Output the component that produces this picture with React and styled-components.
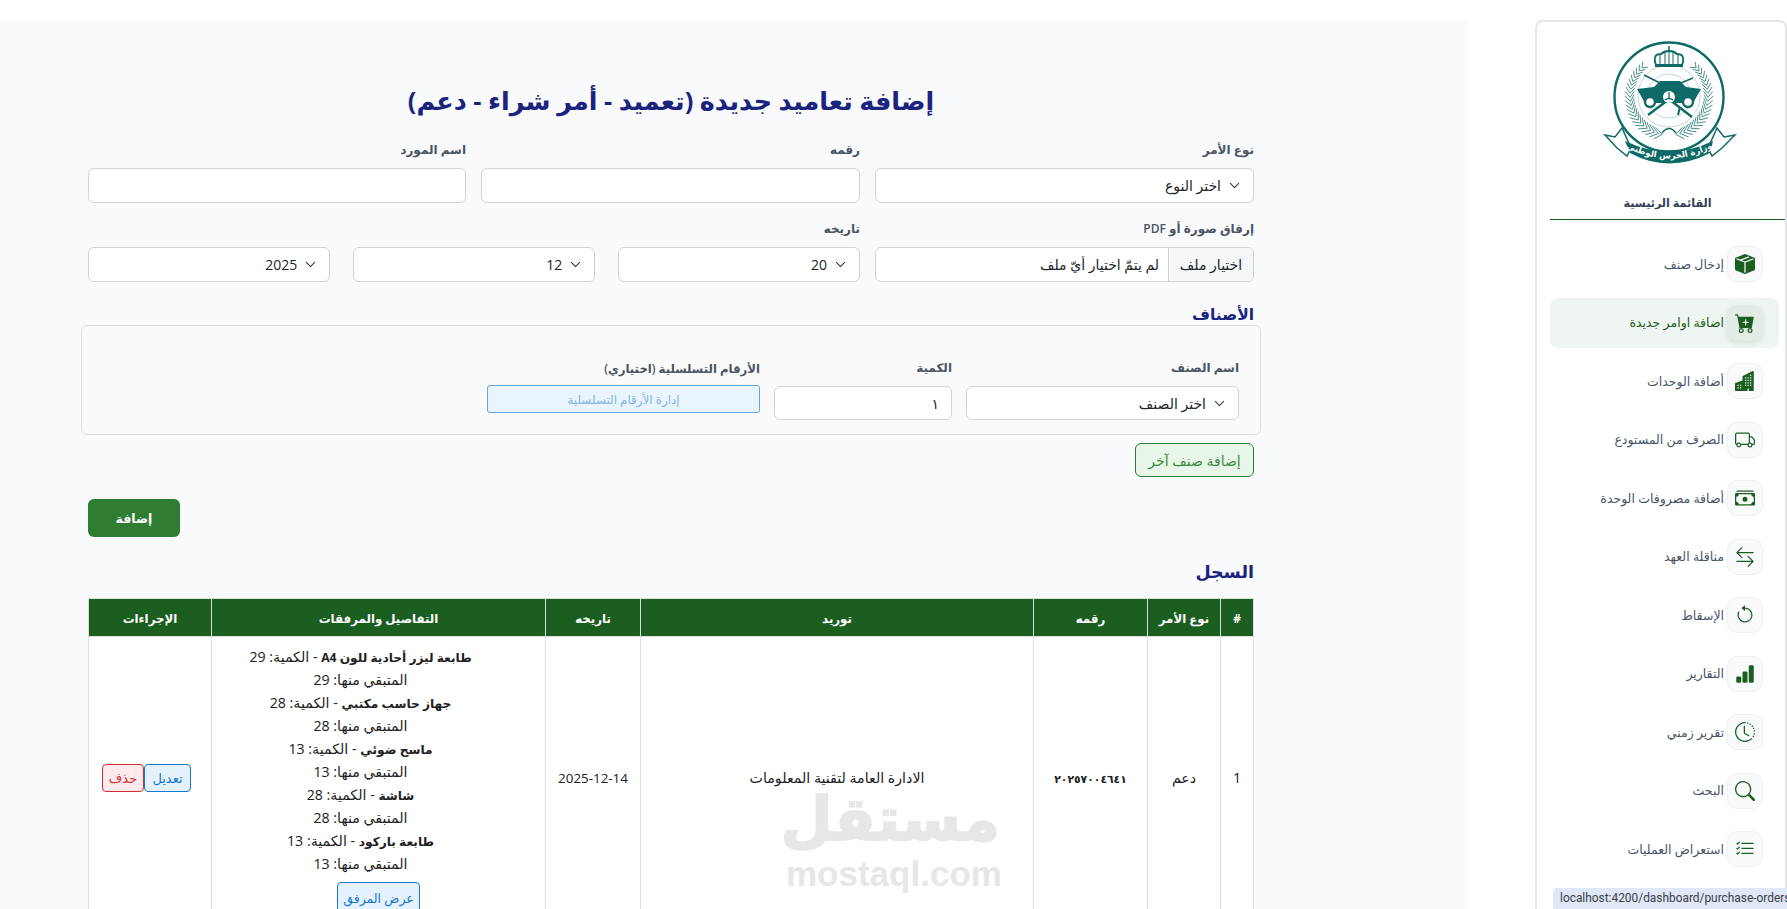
import React from 'react'
import styled, { createGlobalStyle } from 'styled-components'
import {
  BsBoxSeamFill,
  BsCartPlusFill,
  BsBuildingsFill,
  BsTruck,
  BsCashStack,
  BsArrowLeftRight,
  BsArrowCounterclockwise,
  BsBarChartFill,
  BsClockHistory,
  BsSearch,
  BsListCheck,
} from 'react-icons/bs'

const chevron =
  "url(\"data:image/svg+xml,%3csvg xmlns='http://www.w3.org/2000/svg' viewBox='0 0 16 16'%3e%3cpath fill='none' stroke='%23343a40' stroke-linecap='round' stroke-linejoin='round' stroke-width='1.6' d='m2 5 6 6 6-6'/%3e%3c/svg%3e\")"

const GlobalStyle = createGlobalStyle`
  html, body {
    margin: 0;
    height: 100%;
    overflow: hidden;
    background: #fff;
  }
  body {
    font-family: "Open Sans", "DejaVu Sans", sans-serif;
    font-size: 13px;
    color: #212529;
  }
  * { box-sizing: border-box; }
`

const Shell = styled.div`
  direction: rtl;
  display: flex;
  justify-content: flex-start;
  height: 100vh;
  padding-top: 20px;
  overflow: hidden;
`

const Sidebar = styled.aside`
  flex: 0 0 252px;
  border: 2px solid #e4e6ea;
  border-bottom: 0;
  border-radius: 8px 8px 0 0;
  padding: 18px 0 0 13px;
  margin-left: 67px;
  background: #fff;
`

const LogoWrap = styled.div`
  display: flex;
  justify-content: flex-end;
  padding-left: 50px;
  height: 128px;
`

const MenuTitle = styled.div`
  margin-top: 25px;
  padding-bottom: 6px;
  text-align: center;
  font-size: 11.2px;
  font-weight: 600;
  line-height: 20px;
  color: #334155;
  border-bottom: 1px solid #1b5e20;
`

const Menu = styled.nav`
  display: flex;
  flex-direction: column;
  gap: 8.5px;
  margin: 19px 6px 0 0;
`

const MenuItem = styled.a`
  display: flex;
  align-items: center;
  gap: 3px;
  height: 50px;
  padding: 0 16px;
  border-radius: 8px;
  font-size: 12.5px;
  color: ${p => (p.$active ? '#1b5e20' : '#475569')};
  background: ${p => (p.$active ? '#eff5f1' : 'transparent')};
`

const MenuIcon = styled.span`
  flex: 0 0 36px;
  height: 36px;
  display: flex;
  align-items: center;
  justify-content: center;
  border-radius: 10px;
  font-size: 20px;
  color: #1b5e20;
  background: ${p => (p.$active ? '#e2ece5' : '#f8fafc')};
  border: 1px solid ${p => (p.$active ? '#e2ece5' : '#edf2f0')};
  box-shadow: ${p => (p.$active ? '0 2px 5px rgba(27,94,32,.12)' : 'none')};
`

const Main = styled.main`
  position: relative;
  flex: 0 0 1468px;
  padding: 63px 214px 0 88px;
  background: #f8fafc;
  overflow: hidden;
`

const Title = styled.h1`
  margin: 0 0 24px;
  text-align: center;
  font-size: 25.4px;
  font-weight: 700;
  line-height: 34px;
  color: #1a237e;
`

const TopGrid = styled.div`
  display: grid;
  grid-template-columns: 379px 379px 378px;
  gap: 15px;
  margin-bottom: 17px;
`

const SecondGrid = styled.div`
  display: grid;
  grid-template-columns: 379px 1fr;
  gap: 15px;
`

const DateRow = styled.div`
  display: grid;
  grid-template-columns: repeat(3, 1fr);
  gap: 22.5px;
`

const Label = styled.label`
  display: block;
  margin-bottom: 9px;
  font-size: 12px;
  font-weight: 600;
  line-height: 18px;
  color: #4b5563;
`

const Input = styled.input`
  display: block;
  width: 100%;
  height: ${p => p.$h || 35}px;
  padding: 0 12px;
  border: 1px solid #ced4da;
  border-radius: 6px;
  background: #fff;
  font: inherit;
  font-size: 14px;
  color: #212529;
`

const Select = styled.select`
  display: block;
  width: 100%;
  height: ${p => p.$h || 35}px;
  padding: 0 32px 0 12px;
  appearance: none;
  border: 1px solid #ced4da;
  border-radius: 6px;
  background: #fff ${chevron} no-repeat right 13px center / 11px 11px;
  font: inherit;
  font-size: 14px;
  color: #212529;
`

const FileBox = styled.div`
  display: flex;
  height: 35px;
  border: 1px solid #ced4da;
  border-radius: 6px;
  background: #fff;
  overflow: hidden;
  font-size: 14px;
  line-height: 33px;
`

const FileButton = styled.span`
  flex: 0 0 85px;
  text-align: center;
  background: #f5f6f8;
  border-left: 1px solid #ced4da;
`

const FileName = styled.span`
  padding-right: 9px;
`

const SectionTitle = styled.h2`
  margin: ${p => p.$top}px 0 ${p => p.$bottom}px;
  font-size: ${p => p.$size}px;
  font-weight: 600;
  line-height: ${p => p.$line}px;
  color: #1a237e;
`

const ItemBox = styled.div`
  margin: 0 -7px;
  height: 110px;
  padding: 33px 21px 0;
  border: 1px solid #e0e0e0;
  border-radius: 6px;
  background: #fafafa;
`

const ItemRow = styled.div`
  display: grid;
  grid-template-columns: 273px 178px 273px;
  column-gap: 14px;
`

const SerialLabel = styled(Label)`
  font-size: 11.7px;
`

const SerialButton = styled.button`
  display: block;
  width: 100%;
  height: 28px;
  margin-top: -1px;
  border: 1px solid #64a5e6;
  border-radius: 3px;
  background: #eaf4fc;
  font: inherit;
  font-size: 11.9px;
  color: #7fb4e8;
`

const ActionBar = styled.div`
  display: flex;
  justify-content: ${p => (p.$end ? 'flex-end' : 'flex-start')};
  margin-top: ${p => p.$top}px;
`

const OutlineButton = styled.button`
  width: 119px;
  height: 34px;
  border: 1px solid #2e7d32;
  border-radius: 6px;
  background: #e8f5e9;
  font: inherit;
  font-size: 14px;
  color: #3d8a41;
`

const SubmitButton = styled.button`
  width: 92px;
  height: 38px;
  border: 0;
  border-radius: 6px;
  background: #2e7d32;
  font: inherit;
  font-size: 12.5px;
  font-weight: 700;
  color: #fff;
`

const Table = styled.table`
  width: 1165px;
  table-layout: fixed;
  border-collapse: collapse;
  background: #fff;
  font-size: 14.2px;
  color: #212121;

  th, td {
    border: 1px solid #dcdfe2;
    text-align: center;
    vertical-align: middle;
  }
  th {
    height: 38px;
    background: #1b5e20;
    color: #fff;
    font-size: 11.8px;
    font-weight: 700;
  }
`

const DateCell = styled.td`
  font-size: 13.4px;
`

const DetailCell = styled.td`
  padding: 8px 8px 4px;
  height: 282px;
`

const DetailList = styled.ul`
  list-style: none;
  margin: 0;
  padding: 0 36px 0 0;
  line-height: 23px;

  li {
    height: 23px;
  }
  strong {
    font-size: 12.2px;
  }
`

const SerialNumber = styled.strong`
  font-size: 10.8px;
  font-weight: 700;
`

const SmallButton = styled.button`
  width: ${p => p.$w}px;
  height: 28px;
  padding: 0;
  border: 1px solid ${p => p.$color};
  border-radius: 4px;
  background: ${p => p.$bg};
  font: inherit;
  font-size: 13px;
  color: ${p => p.$color};
`

const AttachButton = styled(SmallButton)`
  height: 32px;
  margin-top: 7px;
  font-size: 12.5px;
`

const Actions = styled.div`
  display: flex;
  justify-content: center;
  margin-right: 7px;
`

const Watermark = styled.div`
  position: absolute;
  left: 786px;
  top: 768px;
  width: 214px;
  direction: ltr;
  text-align: center;
  color: #e6e7e7;
  pointer-events: none;
`

const WatermarkArabic = styled.div`
  font-family: "DejaVu Sans", sans-serif;
  font-size: 60px;
  font-weight: 700;
  line-height: 62px;
  direction: rtl;
  -webkit-text-stroke: 2px #e6e7e7;
`

const WatermarkLatin = styled.div`
  margin-top: 6px;
  font-family: "Liberation Sans", sans-serif;
  font-size: 35px;
  font-weight: 700;
  line-height: 36px;
  white-space: nowrap;
`

const StatusBubble = styled.div`
  position: fixed;
  left: 1553px;
  right: 0;
  bottom: 0;
  height: 21px;
  padding-left: 7px;
  border-top-left-radius: 4px;
  background: #dfe7f8;
  font-family: Roboto, sans-serif;
  font-size: 11.9px;
  line-height: 21px;
  color: #3c4043;
  white-space: nowrap;
  overflow: hidden;
`

const menu = [
  ['إدخال صنف', BsBoxSeamFill],
  ['اضافة اوامر جديدة', BsCartPlusFill, true],
  ['أضافة الوحدات', BsBuildingsFill],
  ['الصرف من المستودع', BsTruck],
  ['أضافة مصروفات الوحدة', BsCashStack],
  ['مناقلة العهد', BsArrowLeftRight],
  ['الإسقاط', BsArrowCounterclockwise],
  ['التقارير', BsBarChartFill],
  ['تقرير زمني', BsClockHistory],
  ['البحث', BsSearch],
  ['استعراض العمليات', BsListCheck],
]

const items = [
  ['طابعة ليزر أحادية للون A4', 29],
  ['جهاز حاسب مكتبي', 28],
  ['ماسح ضوئي', 13],
  ['شاشة', 28],
  ['طابعة باركود', 13],
]

const teal = '#0e6a66'

// palm branch: a stem curving up from the bottom of the ring, with a leaf pair at each step
const branch = side => {
  const cx = 69
  const cy = 56
  const r = 39
  let d = ''
  for (let deg = 10; deg <= 140; deg += 6) {
    const a = (deg * Math.PI) / 180
    const x = cx + side * r * Math.sin(a)
    const y = cy + r * Math.cos(a)
    const dir = Math.atan2(-Math.sin(a), side * Math.cos(a))
    const len = 10 - deg / 35
    ;[0.65, -0.65].forEach(off => {
      const t = dir + off
      d += `M${x.toFixed(1)} ${y.toFixed(1)}L${(x + len * Math.cos(t)).toFixed(1)} ${(y + len * Math.sin(t)).toFixed(1)}`
    })
  }
  return d
}

const Logo = () => (
  <svg width="140" height="128" viewBox="0 0 140 128">
    <circle cx="69" cy="57" r="54.5" fill="none" stroke={teal} strokeWidth="2.4" />
    <circle cx="69" cy="56" r="31" fill="none" stroke="#a9c4c2" strokeWidth="0.7" />
    <circle cx="69" cy="56" r="22" fill="none" stroke="#a9c4c2" strokeWidth="0.7" />
    <path d={branch(1)} fill="none" stroke={teal} strokeWidth="0.75" />
    <path d={branch(-1)} fill="none" stroke={teal} strokeWidth="0.75" />
    {/* crown */}
    <path d="M56 25 q-4 -11 5 -11 q3 -3 8 -3 q5 0 8 3 q9 0 5 11 z" fill="#fff" stroke={teal} strokeWidth="1.8" />
    <path d="M60 14v11M65 12v13M69 11v14M73 12v13M78 14v11" stroke={teal} strokeWidth="1" />
    <path d="M55 26h28" stroke={teal} strokeWidth="2" />
    <path d="M69 11v-5" stroke={teal} strokeWidth="1.5" />
    {/* armoured vehicle */}
    <path d="M37 49 L54 47 L60 41 L80 41 L86 47 L101 49 L93 63 L45 63 Z" fill={teal} />
    <path d="M44 35 L64 45 M93 38 L76 45" stroke={teal} strokeWidth="1.6" />
    <circle cx="50" cy="62" r="5" fill="#fff" stroke={teal} strokeWidth="2.4" />
    <circle cx="88" cy="62" r="5" fill="#fff" stroke={teal} strokeWidth="2.4" />
    {/* crossed rifles */}
    <path d="M48 75 L68 60 M92 77 L70 60" stroke={teal} strokeWidth="2.4" />
    <path d="M80 67 L78 75" stroke={teal} strokeWidth="2" />
    {/* emblem */}
    <circle cx="69" cy="57" r="6" fill="#fff" />
    <path d="M69 52v6M65 60q4 -3 8 0" fill="none" stroke={teal} strokeWidth="1.3" />
    <path d="M62 93 q7 -9 14 0" fill="none" stroke={teal} strokeWidth="1.6" />
    {/* ribbon */}
    <path d="M5 95 L15 97 L22 88 L31 108 L27 116 L17 108 Z" fill="#fff" stroke={teal} strokeWidth="1.5" />
    <path d="M135 95 L124 97 L117 88 L108 108 L112 116 L122 108 Z" fill="#fff" stroke={teal} strokeWidth="1.5" />
    <path d="M25 101 Q69 122 113 101 L110 113 Q69 134 30 113 Z" fill={teal} />
    <path id="banner-line" d="M27 108 Q69 129 112 108" fill="none" />
    <text fontSize="8.5" fontWeight="600" fill="#fff" fontFamily="DejaVu Sans, sans-serif" textAnchor="middle">
      <textPath href="#banner-line" startOffset="50%">وزارة الحرس الوطني</textPath>
    </text>
  </svg>
)

const App = () => (
  <>
    <GlobalStyle />
    <Shell>
      <Sidebar>
        <LogoWrap>
          <Logo />
        </LogoWrap>
        <MenuTitle>القائمة الرئيسية</MenuTitle>
        <Menu>
          {menu.map(([label, Icon, active]) => (
            <MenuItem key={label} $active={active}>
              <MenuIcon $active={active}>
                <Icon />
              </MenuIcon>
              {label}
            </MenuItem>
          ))}
        </Menu>
      </Sidebar>

      <Main>
        <Title>إضافة تعاميد جديدة (تعميد - أمر شراء - دعم)</Title>

        <TopGrid>
          <div>
            <Label>نوع الأمر</Label>
            <Select>
              <option>اختر النوع</option>
            </Select>
          </div>
          <div>
            <Label>رقمه</Label>
            <Input />
          </div>
          <div>
            <Label>اسم المورد</Label>
            <Input />
          </div>
        </TopGrid>

        <SecondGrid>
          <div>
            <Label>إرفاق صورة أو PDF</Label>
            <FileBox>
              <FileButton>اختيار ملف</FileButton>
              <FileName>لم يتمّ اختيار أيّ ملف</FileName>
            </FileBox>
          </div>
          <div>
            <Label>تاريخه</Label>
            <DateRow>
              <Select>
                <option>20</option>
              </Select>
              <Select>
                <option>12</option>
              </Select>
              <Select>
                <option>2025</option>
              </Select>
            </DateRow>
          </div>
        </SecondGrid>

        <SectionTitle $top={20} $bottom={-1} $size={15.5} $line={24}>
          الأصناف
        </SectionTitle>
        <ItemBox>
          <ItemRow>
            <div>
              <Label>اسم الصنف</Label>
              <Select $h={34}>
                <option>اختر الصنف</option>
              </Select>
            </div>
            <div>
              <Label>الكمية</Label>
              <Input $h={34} defaultValue="١" />
            </div>
            <div>
              <SerialLabel>الأرقام التسلسلية (اختياري)</SerialLabel>
              <SerialButton>إدارة الأرقام التسلسلية</SerialButton>
            </div>
          </ItemRow>
        </ItemBox>

        <ActionBar $top={8}>
          <OutlineButton>إضافة صنف آخر</OutlineButton>
        </ActionBar>
        <ActionBar $top={22} $end>
          <SubmitButton>إضافة</SubmitButton>
        </ActionBar>

        <SectionTitle $top={20} $bottom={13} $size={17.5} $line={28}>
          السجل
        </SectionTitle>

        <Table>
          <colgroup>
            <col width="33" />
            <col width="73" />
            <col width="114" />
            <col width="393" />
            <col width="95" />
            <col width="334" />
            <col width="123" />
          </colgroup>
          <thead>
            <tr>
              <th>#</th>
              <th>نوع الأمر</th>
              <th>رقمه</th>
              <th>توريد</th>
              <th>تاريخه</th>
              <th>التفاصيل والمرفقات</th>
              <th>الإجراءات</th>
            </tr>
          </thead>
          <tbody>
            <tr>
              <td>1</td>
              <td>دعم</td>
              <td>
                <SerialNumber>٢٠٢٥٧٠٠٤٦٤١</SerialNumber>
              </td>
              <td>الادارة العامة لتقنية المعلومات</td>
              <DateCell>2025-12-14</DateCell>
              <DetailCell>
                <DetailList>
                  {items.map(([name, qty]) => (
                    <React.Fragment key={name}>
                      <li>
                        <strong>{name}</strong> - الكمية: {qty}
                      </li>
                      <li>المتبقي منها: {qty}</li>
                    </React.Fragment>
                  ))}
                </DetailList>
                <AttachButton $w={83} $color="#1976d2" $bg="#e3f2fd">
                  عرض المرفق
                </AttachButton>
              </DetailCell>
              <td>
                <Actions>
                  <SmallButton $w={47} $color="#1976d2" $bg="#e3f2fd">
                    تعديل
                  </SmallButton>
                  <SmallButton $w={42} $color="#d32f2f" $bg="#ffebee">
                    حذف
                  </SmallButton>
                </Actions>
              </td>
            </tr>
          </tbody>
        </Table>

        <Watermark>
          <WatermarkArabic>مستقل</WatermarkArabic>
          <WatermarkLatin>mostaql.com</WatermarkLatin>
        </Watermark>
      </Main>
    </Shell>
    <StatusBubble>localhost:4200/dashboard/purchase-orders</StatusBubble>
  </>
)

export default App
